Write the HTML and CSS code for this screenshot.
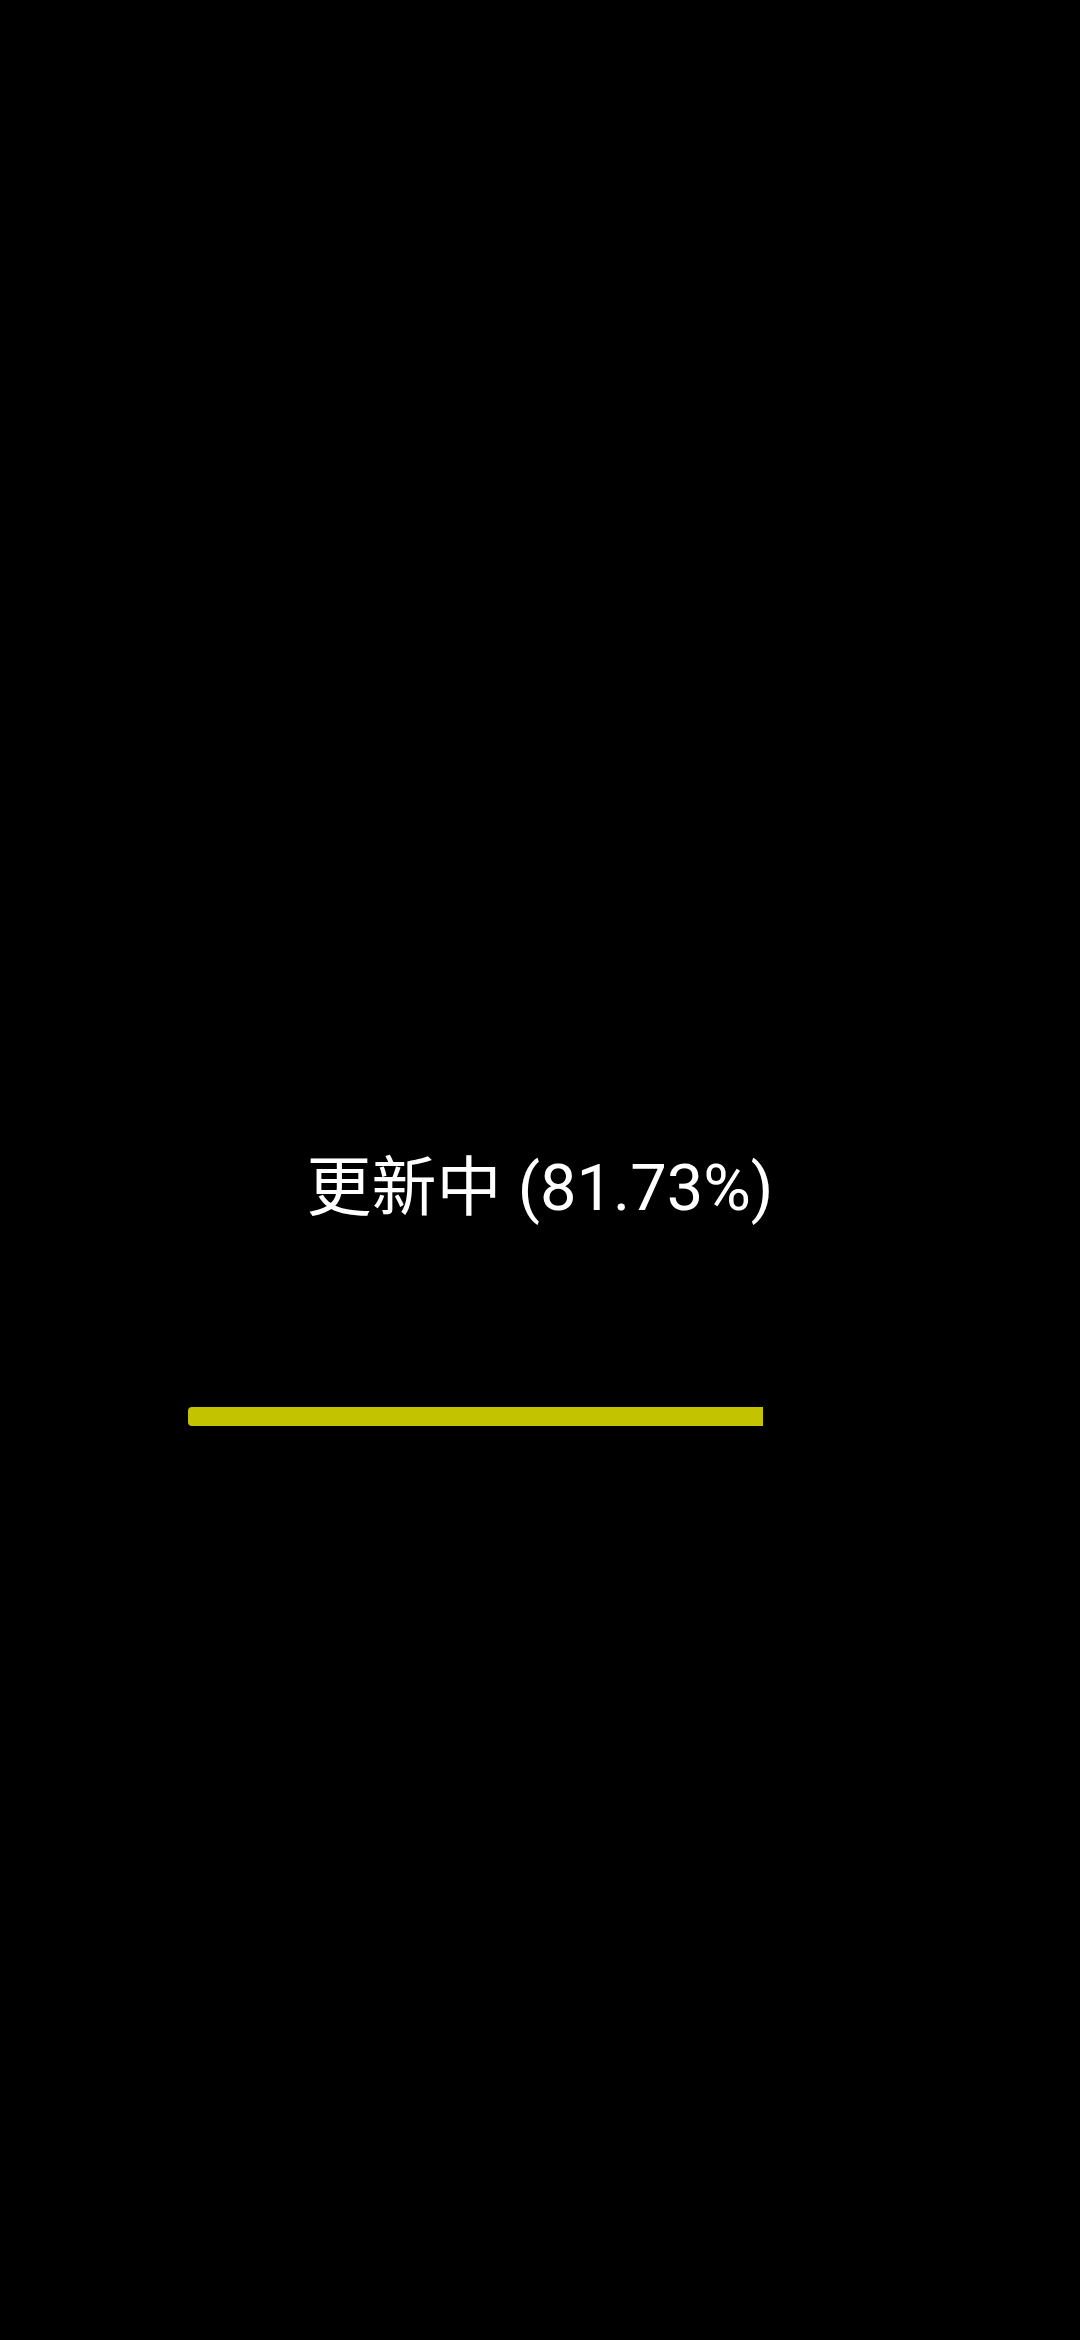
FILE: index.html
```html
<!DOCTYPE html>
<html lang="zh-CN">
<head>
<meta charset="utf-8">
<title>更新中</title>
<link rel="stylesheet" href="styles.css">
</head>
<body>
<main class="screen">
  <div class="status">更新中 (81.73%)</div>
  <div class="track">
    <div class="fill" style="width: 81.73%"></div>
  </div>
</main>
</body>
</html>
```

FILE: styles.css
```css
html, body {
  margin: 0;
  padding: 0;
  background: #000;
}
.screen {
  width: 1080px;
  height: 2340px;
  box-sizing: border-box;
  padding-top: 1138px;
  display: flex;
  flex-direction: column;
  align-items: center;
  background: #000;
}
.status {
  font-family: Roboto, "Noto Sans CJK SC", sans-serif;
  font-size: 65px;
  line-height: 100px;
  color: #fff;
  white-space: nowrap;
}
.track {
  margin-top: 169px;
  width: 704px;
  height: 19px;
}
.fill {
  height: 100%;
  background: #c4c300;
  border-radius: 4px 0 0 4px;
}
```
